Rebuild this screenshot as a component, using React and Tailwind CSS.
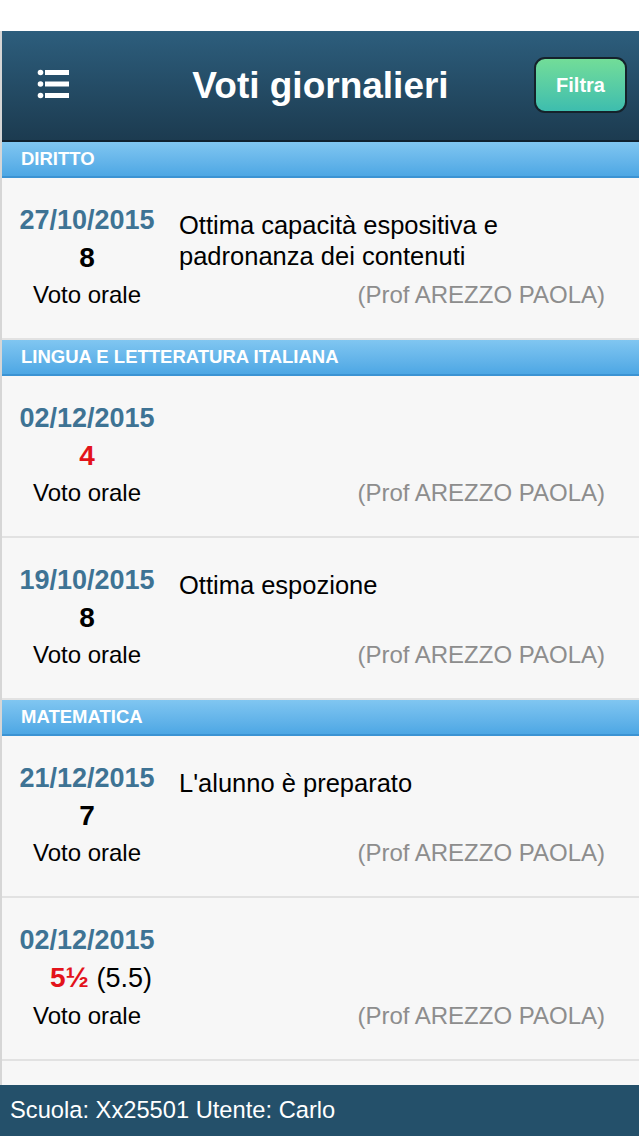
const sections = [
  {
    name: 'DIRITTO',
    items: [
      {
        date: '27/10/2015',
        grade: '8',
        comment: 'Ottima capacità espositiva e padronanza dei contenuti',
      },
    ],
  },
  {
    name: 'LINGUA E LETTERATURA ITALIANA',
    items: [
      { date: '02/12/2015', grade: '4', red: true, comment: '' },
      { date: '19/10/2015', grade: '8', comment: 'Ottima espozione' },
    ],
  },
  {
    name: 'MATEMATICA',
    items: [
      { date: '21/12/2015', grade: '7', comment: "L'alunno è preparato" },
      { date: '02/12/2015', grade: '5½', red: true, extra: '(5.5)', comment: '' },
    ],
  },
];

function MenuIcon() {
  return (
    <svg width="36" height="32" viewBox="0 0 36 32" fill="#ffffff">
      <circle cx="4.5" cy="5.5" r="2.8" />
      <circle cx="4.5" cy="17" r="2.8" />
      <circle cx="4.5" cy="28.5" r="2.8" />
      <rect x="9" y="3" width="24" height="5" />
      <rect x="9" y="14.5" width="24" height="5" />
      <rect x="9" y="26" width="24" height="5" />
    </svg>
  );
}

function GradeRow({ item }) {
  return (
    <div className="flex border-b-2 border-[#e2e2e2] bg-[#f7f7f7] pt-[24px] pb-[24px]">
      <div className="flex w-[170px] shrink-0 flex-col items-center">
        <div className="text-[27px] font-bold leading-[37px] text-[#3e7394]">{item.date}</div>
        <div className={item.extra ? 'pl-[28px] text-[28px] leading-[37px]' : 'text-[28px] leading-[37px]'}>
          <span className={item.red ? 'font-bold text-[#e3131b]' : 'font-bold text-black'}>{item.grade}</span>
          {item.extra && <span className="text-[27px] text-black"> {item.extra}</span>}
        </div>
        <div className="text-[24px] leading-[38px] text-black">Voto orale</div>
      </div>
      <div className="flex flex-1 flex-col pl-[7px] pr-[34px]">
        <div className="mt-[8px] text-[25.5px] leading-[31px] text-black">{item.comment}</div>
        <div className="mt-auto text-right text-[24px] leading-[38px] text-[#8d8d8d]">(Prof AREZZO PAOLA)</div>
      </div>
    </div>
  );
}

export default function App() {
  return (
    <div
      className="flex h-[1136px] w-[639px] flex-col overflow-hidden bg-white"
      style={{ fontFamily: '"Liberation Sans", Arial, sans-serif' }}
    >
      <div className="h-[31px] shrink-0 bg-white" />

      <div className="flex min-h-0 flex-1 flex-col border-l-2 border-[#d6d6d6]">
        {/* Navigation bar */}
        <div className="relative flex h-[111px] shrink-0 items-center justify-center border-b-2 border-[#0f2130] bg-gradient-to-b from-[#2d5e7d] to-[#1c3b50]">
          <div className="absolute left-[34px] top-[36px]">
            <MenuIcon />
          </div>
          <h1 className="text-[37px] font-bold leading-none text-white">Voti giornalieri</h1>
          <button className="absolute right-[12px] top-[26px] flex h-[56px] w-[93px] items-center justify-center rounded-[11px] border-2 border-[#15222b] bg-gradient-to-b from-[#72dd98] to-[#3dbdae] text-[20px] font-bold text-white">
            Filtra
          </button>
        </div>

        {/* List */}
        <div className="min-h-0 flex-1 overflow-hidden bg-[#f7f7f7]">
          {sections.map((section) => (
            <div key={section.name}>
              <div className="flex h-[36px] items-center border-b-2 border-[#3b93d3] bg-gradient-to-b from-[#80c6f1] to-[#4da7e4] pl-[19px] text-[18.5px] font-bold text-white">
                {section.name}
              </div>
              {section.items.map((item, idx) => (
                <GradeRow key={idx} item={item} />
              ))}
            </div>
          ))}
        </div>
      </div>

      {/* Footer */}
      <div className="flex h-[51px] shrink-0 items-center bg-[#24506a] pl-[10px] text-[23.7px] text-white">
        Scuola: Xx25501 Utente: Carlo
      </div>
    </div>
  );
}
